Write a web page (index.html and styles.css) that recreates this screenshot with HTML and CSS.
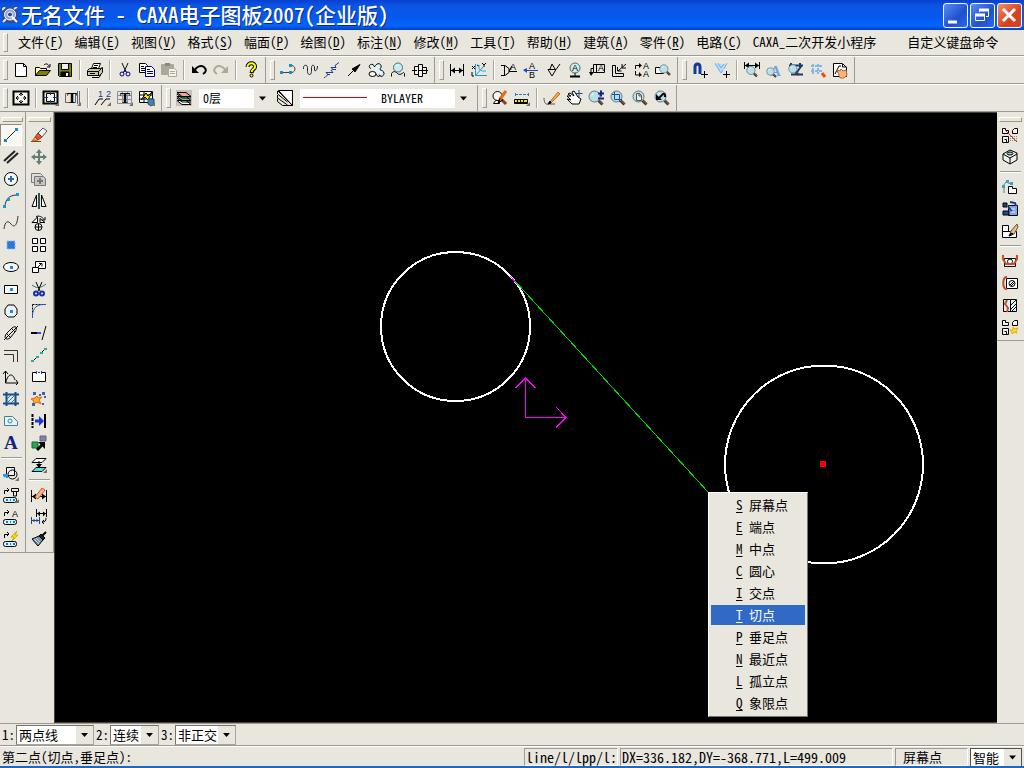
FILE: index.html
```html
<!DOCTYPE html>
<html lang="zh-CN">
<head>
    <meta charset="UTF-8">
    <meta name="viewport" content="width=device-width, initial-scale=1.0">
    <title>无名文件 - CAXA电子图板2007(企业版)</title>
    <link rel="stylesheet" href="styles.css">
</head>
<body>
    <!-- Shared icon parts -->
    <svg class="symbols" aria-hidden="true">
        <symbol id="lens" viewBox="0 0 16 16">
            <path d="M10.500 10.500l4 4" stroke="#333" stroke-width="3"/>
            <path d="M11 10.500l3.500 3.500" stroke="#c66a20"/>
            <circle cx="6.500" cy="6.500" r="5.500" fill="#b9dfe8" stroke="#5d7884"/>
            <path d="M3.500 5.500l2.500-2" stroke="#fff"/>
        </symbol>
        <symbol id="more" viewBox="0 0 16 16">
            <path d="M16 12v4h-4z" fill="#77736a" stroke="none"/>
        </symbol>
        <symbol id="parts" viewBox="0 0 16 16">
            <path d="M.5 1.500h3v2h3v3h-6zM10.500 6.500v-3l2-2h3v5zM.5 9.500h6v6h-6zM2.500 12.500h2v3" fill="#f4f2ec"/>
        </symbol>
    </svg>

    <header class="title-bar">
        <svg class="app-icon" viewBox="0 0 16 16"><rect width="16" height="16" fill="#344a92"/><path d="M0 3l3-3M1 15l3-3M12 2l3-2" stroke="#dfe8ff" stroke-width="2"/><circle cx="8" cy="7.500" r="5.500" fill="#8ea6dc" stroke="#fff"/><circle cx="8" cy="7.500" r="2.500" fill="#344a92" stroke="#fff"/><path d="M10 10l5 5" stroke="#fff" stroke-width="2"/></svg>
        <h1>无名文件 - CAXA电子图板2007(企业版)</h1>
        <div class="window-buttons">
            <button aria-label="最小化"><svg viewBox="0 0 22 22"><path d="M4 18h9" stroke="#fff" stroke-width="3"/></svg></button>
            <button aria-label="还原"><svg viewBox="0 0 22 22"><path d="M8.500 8V5.500h9v7H15M4.500 10.500h9v6h-9z" fill="none" stroke="#fff"/><path d="M8 6h10M4 11h10" stroke="#fff" stroke-width="3"/></svg></button>
            <button class="close" aria-label="关闭"><svg viewBox="0 0 22 22"><path d="M5 5l12 12M17 5L5 17" stroke="#fff" stroke-width="3"/></svg></button>
        </div>
    </header>

    <nav class="menu-bar">
        <button>文件(<u>F</u>)</button>
        <button>编辑(<u>E</u>)</button>
        <button>视图(<u>V</u>)</button>
        <button>格式(<u>S</u>)</button>
        <button>幅面(<u>P</u>)</button>
        <button>绘图(<u>D</u>)</button>
        <button>标注(<u>N</u>)</button>
        <button>修改(<u>M</u>)</button>
        <button>工具(<u>T</u>)</button>
        <button>帮助(<u>H</u>)</button>
        <button>建筑(<u>A</u>)</button>
        <button>零件(<u>R</u>)</button>
        <button>电路(<u>C</u>)</button>
        <button>CAXA_二次开发小程序</button>
        <button class="custom">自定义键盘命令</button>
    </nav>

    <div class="toolbar-row">
        <div class="toolbar">
            <button aria-label="新建"><svg viewBox="0 0 16 16"><path d="M2.500 1.500h8l3 3v10h-11z" fill="#fff"/><path d="M10.500 1.500v3h3"/></svg></button>
            <button aria-label="打开"><svg viewBox="0 0 16 16"><path d="M.5 13.500v-8h4l1 1h6v3" fill="#ffff9c"/><path d="M.5 13.500l4-5h11l-4 5z" fill="#808000"/><path d="M9 3c2-2 4-1 5 1M15 2v3h-3"/></svg></button>
            <button aria-label="保存"><svg viewBox="0 0 16 16"><path d="M1.500 1.500h13v13h-12l-1-1z" fill="#808000"/><path d="M4.500 1.500h7v6h-7z" fill="#eee"/><path d="M4 10h8v4H4z" fill="#000"/><path d="M10 11v3" stroke="#fff" stroke-width="2"/></svg></button>
            <hr>
            <button aria-label="打印"><svg viewBox="0 0 16 16"><path d="M4.500 6.500l2-5h7l-2 5" fill="#fff"/><path d="M7 3.500h4M6 5.500h4"/><path d="M.5 8.500l2-2h11l2-1v5l-3 3h-12z" fill="#c9c5b9"/><path d="M.5 9.500h11l3-3M1 13.500h11M11.500 9.500v4M3 11.500h5M5 15.500h7l2-3"/><path d="M8 11.500h2" stroke="#cc0"/></svg></button>
            <hr>
            <button aria-label="剪切"><svg viewBox="0 0 16 16"><path d="M5 1l4 9M11 1l-4 9" stroke="#111"/><g stroke="#000080"><circle cx="5" cy="12" r="2"/><circle cx="11" cy="12" r="2"/><path d="M8 8l-2 3M8 8l2 3"/></g></svg></button>
            <button aria-label="复制"><svg viewBox="0 0 16 16"><path d="M.5 1.500h6l2 2v7h-8z" fill="#fff"/><path d="M2 4.500h3M2 6.500h5M2 8.500h5"/><path d="M6.500 4.500h6l3 3v7h-9z" fill="#fff" stroke="#000080"/><path d="M8 7.500h3M8 9.500h6M8 11.500h6" stroke="#000080"/></svg></button>
            <button aria-label="粘贴" disabled><svg viewBox="0 0 16 16"><path d="M.5 2.500h12v10H.5z" fill="#aca899" stroke="#aca899"/><path d="M4 2.500h5" stroke="#888" stroke-width="3"/><path d="M7.500 6.500h6l2 2v6h-8z" fill="#f4f2ea" stroke="#aca899"/><path d="M9 9.500h5M9 11.500h5" stroke="#aca899"/></svg></button>
            <hr>
            <button aria-label="撤销"><svg viewBox="0 0 16 16"><path d="M3 9c3-5 7-6 10-4 3 3 2 5-1 7" stroke-width="2"/><path d="M1 4v7h7z" fill="#000" stroke="none"/></svg></button>
            <button aria-label="重做" disabled><svg viewBox="0 0 16 16"><path d="M13 9C10 4 6 3 3 5c-3 3-2 5 1 7" stroke="#aca899" stroke-width="2"/><path d="M15 4v7H8z" fill="#aca899" stroke="none"/></svg></button>
            <hr>
            <button aria-label="帮助"><svg viewBox="0 0 16 16"><path d="M4.500 5c0-5 8-5 7.500 0 0 2-3 2-3.500 6" stroke-width="4"/><path d="M4.500 5c0-5 8-5 7.500 0 0 2-3 2-3.500 5" stroke="#ff0" stroke-width="2"/><circle cx="8.500" cy="13.500" r="1.500" fill="#ff0"/></svg></button>
        </div>
        <div class="toolbar">
            <button aria-label="标注线"><svg viewBox="0 0 16 16"><path d="M2 10.500h10M10 3.500h2c4 1 4 6 0 7" stroke="#444"/><path d="M0 9h3v3H0zM9 9h3v3H9zM9 2h3v3H9z" fill="#1590c8" stroke="none"/></svg></button>
            <button aria-label="波浪线"><svg viewBox="0 0 16 16"><path d="M1.500 7V5.500c0-3 4-3 4 0v4c0 4 4 4 4 0v-4c0-3 3-3 3 0v3M12.500 5v2c0 3 3 2 3-3" stroke="#223"/></svg></button>
            <button aria-label="双折线"><svg viewBox="0 0 16 16"><path d="M0 15.500h1l3-3-2-2h7l-2-2 2-1-2-2h5l-1-2 4-3M3 12.500h3M9 7.500h3" stroke="#1c3c96"/></svg></button>
            <button aria-label="箭头"><svg viewBox="0 0 16 16"><path d="M2 14L12 4"/><path d="M14 2.500L6 7l3 3z" fill="#000"/></svg></button>
            <button aria-label="云线"><svg viewBox="0 0 16 16"><path d="M3 6.500c-3-1-2-5 2-4 1 1 0 2 2 2 1-3 5-4 6-1s-2 3-1 4 4 1 4 4-4 4-5 1" fill="#dff3f5"/><ellipse cx="4.500" cy="12" rx="3.500" ry="2.500" fill="#f8f8f4"/><path d="M8 12c1 3 4 3 4 1"/></svg></button>
            <button aria-label="局部圆"><svg viewBox="0 0 16 16"><path d="M1.500 14.500v-3c2-3 4-2 6 0s5 0 6-1l1 1v3"/><circle cx="8" cy="5.500" r="4.500" fill="#c5edf2" stroke="#466f7b"/><path d="M6 4l2-1" stroke="#fff"/></svg></button>
            <button aria-label="孔轴"><svg viewBox="0 0 16 16"><path d="M2.500 4.500h4v8h-4zM6.500 2.500h4v12h-4zM10.500 5.500h4v6h-4z" fill="#f3f1ea"/><path d="M0 8.500h5M7 8.500h3M11 8.500h5"/></svg></button>
        </div>
        <div class="toolbar">
            <button aria-label="尺寸标注"><svg viewBox="0 0 16 16"><path d="M1.500 2v12M14.500 2v12M2 8.500h12"/><path d="M2 8.500l4-3v6zM14 8.500l-4-3v6z" fill="#000" stroke="none"/></svg></button>
            <button aria-label="坐标标注"><svg viewBox="0 0 16 16"><path d="M4.500 2v11.500H16M5 13l7-8" stroke="#169bd5"/><path d="M1 4l3 3M1 7l3-3M11 1l2 2 2-2M13 3v2M1 10v4h2M6 3l2 1"/><path d="M8 3v4l3 2h4" stroke="#33a6d8"/></svg></button>
            <hr>
            <button aria-label="倒角标注"><svg viewBox="0 0 16 16"><path d="M0 3.500h4l4 3v4l-4 3H0M3.500 4v9M8 9.500h8M8 9l3-5"/><text x="9" y="8">A</text></svg></button>
            <button aria-label="引出说明"><svg viewBox="0 0 16 16"><path d="M1 8.500h14" stroke="#164cc1"/><path d="M0 8l4-2v5z" fill="#164cc1" stroke="none"/><text x="6" y="7">A</text><text x="6" y="16">B</text></svg></button>
            <button aria-label="粗糙度"><svg viewBox="0 0 16 16"><path d="M3 7.500h8L7 14zM11 7.500L15 2"/><path d="M5 7l2-5 3 5"/></svg></button>
            <button aria-label="基准代号"><svg viewBox="0 0 16 16"><circle cx="8" cy="6" r="5" fill="#cdeeed" stroke="#49737a"/><path d="M8 11v3"/><path d="M3 14.500h10" stroke-width="2"/><text x="5" y="9">A</text></svg></button>
            <button aria-label="形位公差"><svg viewBox="0 0 16 16"><path d="M4.500 2.500h11v8h-11zM7.500 2v8M4 6.500H2V11" fill="none"/><path d="M0 10h5l-3 4z" fill="#000" stroke="none"/><text x="9" y="9">A</text></svg></button>
            <button aria-label="焊接符号"><svg viewBox="0 0 16 16"><path d="M1.500 3.500h3v8h8v3h-11zM15 2L7 9M6.500 5v4h4M11 2v4h4"/></svg></button>
            <button aria-label="剖切符号"><svg viewBox="0 0 16 16"><path d="M2.500 7V3.500H6M2.500 9v4H6"/><path d="M6 1l3 2.500L6 6zM6 10l3 3-3 2z" fill="#000" stroke="none"/><text x="10" y="7">A</text><text x="10" y="15">A</text></svg></button>
            <button aria-label="局部放大"><svg viewBox="0 0 16 16"><path d="M.5 5.500h8v6h-8z" fill="#f7f5ee"/><use href="#lens" x="4" y="1" width="12" height="14"/></svg></button>
        </div>
        <div class="toolbar">
            <button aria-label="捕捉设置"><svg viewBox="0 0 16 16"><path d="M3 12V5c0-4 5-4 5 0v7" stroke="#123a94" stroke-width="3"/><path d="M9 12.500h7M12.500 9v7"/></svg></button>
            <button aria-label="拾取过滤"><svg viewBox="0 0 16 16"><path d="M0 2h13l-6 10z" fill="#b6dbfb" stroke="none"/><path d="M1 1l6 10 2-3M13 1l-3 6M4 1l3 5 3-4" stroke="#78b1e2"/><path d="M9 12.500h7M12.500 9v7"/></svg></button>
            <hr>
            <button aria-label="查询距离"><svg viewBox="0 0 16 16"><path d="M.5 0v7M15.500 0v7M1 3.500h14"/><path d="M1 3.500l4-3v6zM15 3.500l-4-3v6z" fill="#000" stroke="none"/><use href="#lens" x="2" y="3" width="12" height="13"/></svg></button>
            <button aria-label="文字查找"><svg viewBox="0 0 16 16"><text class="big blue" x="4" y="14">A</text><use href="#lens" x="0" y="5" width="11" height="11"/></svg></button>
            <button aria-label="查询面积"><svg viewBox="0 0 16 16"><path d="M1 3.500h14M3 12.500h12M14 3L7 13M3 1v4M12 1v4" stroke="#153d72" stroke-width="2"/><use href="#lens" x="0" y="2" width="12" height="12"/></svg></button>
            <button aria-label="栅格"><svg viewBox="0 0 16 16"><path d="M1 4h12M1 9h12M3 2v10M8 2v10" stroke="#84b6ec" stroke-width="2" stroke-dasharray="3 1"/><path d="M12 11l3 4" stroke="#f04c18" stroke-width="3"/></svg></button>
            <button aria-label="实时平移"><svg viewBox="0 0 16 16"><path d="M1.500 1.500h9l4 4v9h-13z" fill="#fff"/><path d="M3 12L7 4h2M10.500 2v3h4"/><path d="M6 11l-1-3 3 1 1-2 2 2 3-1 1 5-3 3H8z" fill="#f4b57e" stroke="#b4642c"/></svg></button>
        </div>
    </div>

    <div class="toolbar-row">
        <div class="toolbar">
            <button aria-label="图幅设置"><svg viewBox="0 0 16 16"><path d="M.5 1.500h15v13H.5z" fill="#f4f2ec" stroke-width="2"/><path d="M8 3v3M8 10v3M3 8h3M10 8h3M6 5l2-2 2 2M6 11l2 2 2-2M5 6L3 8l2 2M11 6l2 2-2 2"/></svg></button>
            <hr>
            <button aria-label="调入图框"><svg viewBox="0 0 16 16"><path d="M.5 1.500h14v12H.5z" fill="#f4f2ec" stroke-width="2"/><path d="M3.500 3.500h8v8h-8z"/><path d="M7.500 1v4M7.500 10v4M0 7.500h5M10 7.500h5" stroke="#123b80"/><use href="#more"/></svg></button>
            <button aria-label="调入标题栏"><svg viewBox="0 0 16 16"><path d="M.5 3.500h10v9H.5zM14.500 1v13M12.500 1v13" stroke="#666"/><text class="big" x="2" y="13">T</text><use href="#more"/></svg></button>
            <hr>
            <button aria-label="生成序号"><svg viewBox="0 0 16 16"><text class="navy" x="3" y="7">1</text><text class="navy" x="11" y="7">2</text><path d="M0 15l4-6h4M6 15l5-6h4"/><use href="#more"/></svg></button>
            <button aria-label="填写明细表"><svg viewBox="0 0 16 16"><path d="M.5 1.500h14v12H.5zM0 5.500h15M0 9.500h15M5.500 1v13M10.500 1v13" stroke="#8593a3"/><text class="big" x="3" y="13">T</text><use href="#more"/></svg></button>
            <button aria-label="明细表输出"><svg viewBox="0 0 16 16"><path d="M.5 1.500h13v11H.5z" fill="#fff"/><path d="M0 5h14M0 9h14M5 1v12"/><path d="M2 10l5-7 2 3 4-4-4 8-3-3z" fill="#ffe600"/><path d="M9 9h6v5l-3 2-3-2z" fill="#4780b7" stroke="#234f7b"/><use href="#more"/></svg></button>
        </div>
        <div class="toolbar">
            <button aria-label="层控制"><svg viewBox="0 0 16 16"><path d="M0 0h16v16H0z" fill="#c4c1bb" stroke="none"/><path d="M1 10.500h9l5 4H6z" fill="#fff"/><path d="M1 6.500h9l5 4H6z" fill="#64cf78"/><path d="M1 2.500h9l5 4H6z" fill="#f7a29a"/><path d="M1 4l5 4h9M1 8l5 4h9"/></svg></button>
            <select class="layer" aria-label="当前层"><option>0层</option></select>
            <button aria-label="线型"><svg viewBox="0 0 16 16"><path d="M1.500.5h14v15z" fill="#fff"/><path d="M15.500.5v15M.5 1v3l10 8M.5 5v3l10 7M.5 8.500v3l5 4h10M1 1l14 14"/></svg></button>
            <select class="line-type" aria-label="当前线型"><option>BYLAYER</option></select>
        </div>
        <div class="toolbar">
            <button aria-label="重画"><svg viewBox="0 0 16 16"><path d="M1.500 13.500h6v-3h-4z" fill="#fff"/><circle cx="5.500" cy="6" r="4.500" fill="#fff6ea"/><path d="M9 9l5 5" stroke="#8e3d14" stroke-width="3"/><path d="M14 1L8 9" stroke="#e96a1a" stroke-width="3"/><path d="M8 8l-2 5 5-3"/></svg></button>
            <button aria-label="比例尺"><svg viewBox="0 0 16 16"><path d="M1 4.500h14M1.500 3v3M14.500 3v3" stroke="#3e78ac" stroke-dasharray="3 1"/><path d="M.5 9.500h13v4H.5z" fill="#ffe600"/><path d="M0 12.500h14M3.500 10v2M6.500 10v2M9.500 10v2"/><use href="#more"/></svg></button>
            <hr>
            <button aria-label="画笔"><svg viewBox="0 0 16 16"><path d="M0 8c0 5 2 7 5 6h6" stroke="#555"/><path d="M5 13L14 2l2 2-9 9z" fill="#f6a646" stroke="#c96a20"/><path d="M4 14l2-3 1 2z" fill="#000"/></svg></button>
            <button aria-label="动态平移"><svg viewBox="0 0 16 16"><path d="M1 6h4L2 4l2-1 4 3-2-4 2-1 4 6 3 2-2 5H6L1 9l4 1z" fill="#fff"/><path d="M13 0v7M9.500 3.500h7" stroke="#174b85"/></svg></button>
            <button aria-label="动态缩放"><svg viewBox="0 0 16 16"><use href="#lens"/><path d="M10 3.500h6M13 .5v6M10 8.500h6" stroke="#18238c" stroke-width="2"/></svg></button>
            <button aria-label="窗口放大"><svg viewBox="0 0 16 16"><use href="#lens"/><path d="M4.500 4.500h5v5h-5zM2 4.500h3M9.500 9v3M4.500 2v3M9 9.500h3" stroke="#164e9e"/></svg></button>
            <button aria-label="显示全部"><svg viewBox="0 0 16 16"><use href="#lens"/><path d="M4.500 3.500h3l2 2v5h-5zM7 3v3h3" fill="#e8eeee" stroke="#555"/></svg></button>
            <button aria-label="显示上一步"><svg viewBox="0 0 16 16"><use href="#lens"/><path d="M5 8l4-4c2-1 2 1 2 3" stroke-width="2"/><path d="M2 4v6h6z" fill="#000" stroke="none"/></svg></button>
        </div>
    </div>

    <main class="workspace">
        <aside class="side-bar">
            <button class="active" aria-label="直线"><svg viewBox="0 0 16 16"><path d="M2 14L14 2" stroke="#222"/><path d="M1 12h3v3H1zM12 1h3v3h-3z" fill="#1e86cc" stroke="none"/></svg></button>
            <button aria-label="平行线"><svg viewBox="0 0 16 16"><path d="M1 12L12 2M4 14L15 4" stroke="#222" stroke-width="2"/></svg></button>
            <button aria-label="圆"><svg viewBox="0 0 16 16"><circle cx="8" cy="8" r="6.500" fill="#f4faff"/><path d="M5 8h6M8 5v6" stroke="#2467cf" stroke-width="2"/></svg></button>
            <button aria-label="圆弧"><svg viewBox="0 0 16 16"><path d="M2 14C2 7 6 2 14 2" stroke="#333"/><path d="M0 12h3v3H0zM4 5h3v3H4zM13 0h3v3h-3z" fill="#1e96dc" stroke="none"/></svg></button>
            <button aria-label="样条"><svg viewBox="0 0 16 16"><path d="M1 14c1-8 4-9 7-5s6 2 7-8" stroke="#333"/></svg></button>
            <button aria-label="点"><svg viewBox="0 0 16 16"><path d="M4 4h8v8H4z" fill="#2d76d8" stroke="#90b8f0" stroke-dasharray="2 1"/></svg></button>
            <button aria-label="椭圆"><svg viewBox="0 0 16 16"><ellipse cx="8" cy="8" rx="7.500" ry="4.500" fill="#f4faff"/><path d="M7 7h3v3H7z" fill="#2d86d8" stroke="none"/></svg></button>
            <button aria-label="矩形"><svg viewBox="0 0 16 16"><path d="M1.500 4.500h13v8h-13z" fill="#f4faff"/><path d="M7 7h3v3H7z" fill="#2d86d8" stroke="none"/></svg></button>
            <button aria-label="正多边形"><svg viewBox="0 0 16 16"><path d="M5 2h6l3 4v5l-3 3H5l-3-3V6z" fill="#e8f4fb"/><path d="M7 7h3v3H7z" fill="#2d86d8" stroke="none"/></svg></button>
            <button aria-label="中心线"><svg viewBox="0 0 16 16"><path d="M4 8l5-5c4-3 6 0 3 4l-5 6c-4 3-7-1-3-5zM1 15L15 1M8 3l4 4M4 9l4 4"/></svg></button>
            <button aria-label="等距线"><svg viewBox="0 0 16 16"><path d="M1 3.500h13.500V15M1 7.500h9.500V15" stroke="#333"/></svg></button>
            <button aria-label="公式曲线"><svg viewBox="0 0 16 16"><path d="M2.500 2v12H15M0 5l2.500-3L5 5M13 11l2 3-2 2M3 13c2-9 7-9 9-2"/></svg></button>
            <button aria-label="剖面线"><svg viewBox="0 0 16 16"><path d="M3.500 1v14M12.500 1v14M0 3.500h16M0 12.500h16" stroke="#174f87" stroke-width="2"/><path d="M4 8l4-4M4 12l8-8M8 12l4-4" stroke="#2375a8"/></svg></button>
            <button aria-label="填充"><svg viewBox="0 0 16 16"><path d="M1.500 3.500h8l5 5v4h-13z" fill="#e4f3f9" stroke="#4a7e91"/><circle cx="7" cy="8" r="2" stroke="#288ca7"/></svg></button>
            <button aria-label="文字"><svg viewBox="0 0 16 16"><text class="serif" x="1" y="14">A</text></svg></button>
            <hr>
            <button aria-label="块生成"><svg viewBox="0 0 16 16"><path d="M3.500 2.500h8v8h-8z" fill="#f4f2ec"/><circle cx="9.500" cy="9.500" r="4.500"/><path d="M0 10h4v3M1 12l2-2" stroke="#219ce0" stroke-width="2"/><use href="#more"/></svg></button>
            <button aria-label="提取图符"><svg viewBox="0 0 16 16"><path d="M1.500 7V3.500H6M4 1l2 2-2 2M8.500 1.500h7v3h-7zM10.500 5v4h3V5"/><rect x=".5" y="10.500" width="13" height="5" rx="2" fill="#cdf4ff"/><path d="M3 13h2M7 13h1M10 13h2" stroke="#167bb2" stroke-width="2"/><use href="#more"/></svg></button>
            <button aria-label="定义图符"><svg viewBox="0 0 16 16"><path d="M1.500 7V3.500H6M4 1l2 2-2 2"/><text x="9" y="8">A</text><rect x=".5" y="10.500" width="13" height="5" rx="2" fill="#cdf4ff"/><path d="M3 13h2M7 13h1M10 13h2" stroke="#167bb2" stroke-width="2"/></svg></button>
            <button aria-label="驱动图符"><svg viewBox="0 0 16 16"><path d="M1.500 7V3.500H6M4 1l2 2-2 2"/><path d="M14 0L8 6h3L9 10l6-6h-3z" fill="#ffe600" stroke="#d7a700"/><rect x=".5" y="10.500" width="13" height="5" rx="2" fill="#cdf4ff"/><path d="M3 13h2M7 13h1M10 13h2" stroke="#167bb2" stroke-width="2"/></svg></button>
        </aside>
        <aside class="side-bar second">
            <button aria-label="删除"><svg viewBox="0 0 16 16"><path d="M0 14.500h10" stroke="#9d352b"/><path d="M1 14l3-4 3 3z" fill="#f4ac54" stroke="#b06a2a"/><path d="M7 6l5-5 4 3-5 6z" fill="#f6f4ee" stroke="#555"/><path d="M4 10l3-4 4 4-4 3z" fill="#e45631" stroke="#8a3a20"/></svg></button>
            <button aria-label="平移"><svg viewBox="0 0 16 16"><path d="M8 2v12M2 8h12" stroke="#647e76" stroke-width="2"/><path d="M8 0l3 4H5zM8 16l3-4H5zM0 8l4-3v6zM16 8l-4-3v6z" fill="#647e76" stroke="none"/></svg></button>
            <button aria-label="平移复制"><svg viewBox="0 0 16 16"><g stroke="#777"><path d="M.5 2.500h9l2 2v7h-11z" fill="#ddd"/><path d="M3.500 5.500h9l2 2v7h-11z" fill="#c6c6c6"/><path d="M9 7v6M6 10h6" stroke-width="2"/></g></svg></button>
            <button aria-label="镜像"><svg viewBox="0 0 16 16"><path d="M5.500 2v11.500H1zM10.500 2v11.500H15z" fill="#f4f8f6"/><path d="M8 0v16" stroke="#355" stroke-width="2"/></svg></button>
            <button aria-label="旋转"><svg viewBox="0 0 16 16"><path d="M6.500 2L1 7.500h5.500zM9 3.500l5 4H9zM5 1.500c3-1 6 0 8 3M14 2v3h-3" fill="#f4f2ec"/><circle cx="7.500" cy="12" r="3.500" fill="#f4f2ec"/><path d="M4 12h7M7.500 8.500v7"/></svg></button>
            <button aria-label="阵列"><svg viewBox="0 0 16 16"><path d="M1.500 1.500h5v5h-5zM9.500 1.500h5v5h-5zM1.500 9.500h5v5h-5zM9.500 9.500h5v5h-5z" fill="#fff"/></svg></button>
            <button aria-label="比例缩放"><svg viewBox="0 0 16 16"><path d="M4.500 2.500h10v7h-10z" fill="#fff"/><path d="M1.500 8.500h6v5h-6z" fill="#fff"/><path d="M7 8l4-4M8 4.500h3v3"/></svg></button>
            <button aria-label="裁剪"><svg viewBox="0 0 16 16"><path d="M1 4c5 4 9 3 14-1" stroke="#2d7777"/><path d="M5 1l4 9M11 1L7 10"/><g stroke="#1732a8" stroke-width="2"><circle cx="5" cy="12.500" r="2"/><circle cx="11" cy="12.500" r="2"/></g></svg></button>
            <button aria-label="过渡"><svg viewBox="0 0 16 16"><path d="M1.500 1.500H15M1.500 1.500V15" stroke-dasharray="2 1"/><path d="M1.500 15V12C2 5 6 1.500 12 1.500h3" stroke="#2855b3"/></svg></button>
            <button aria-label="延伸"><svg viewBox="0 0 16 16"><path d="M0 8h6" stroke-width="2"/><path d="M6 8h4" stroke="#2855d8" stroke-width="2"/><path d="M15 1l-4 14"/></svg></button>
            <button aria-label="打断"><svg viewBox="0 0 16 16"><path d="M2 14l4-4M10 6l4-4"/><path d="M0 13h3v2H0zM5 9h3v2H5zM9 5h3v2H9zM13 1h3v2h-3z" fill="#2da4b4" stroke="none"/></svg></button>
            <button aria-label="拉伸"><svg viewBox="0 0 16 16"><path d="M5 3.500H1.500v9h13v-9H11" fill="#fff"/><path d="M5.500 2v3M10.500 2v3M7 3.500h2" stroke="#283c9d"/></svg></button>
            <button aria-label="打散"><svg viewBox="0 0 16 16"><path d="M6 5l1 2 4-1-3 3 2 4-4-2-4 3 1-4-3-2 4-1z" fill="#ffae22" stroke="#df6618"/><path d="M2 1h3v3H2zM11 1h3v3h-3zM8 3h2v2H8zM13 5h2v2h-2zM1 12h3v3H1zM11 12h2v2h-2z" fill="#4060a8" stroke="none"/></svg></button>
            <button aria-label="移动到"><svg viewBox="0 0 16 16"><path d="M1.500 1v14" stroke-width="2" stroke-dasharray="3 1"/><path d="M14 1v14" stroke-width="2"/><path d="M4 8h5" stroke="#1732e8" stroke-width="3"/><path d="M8 3l5 5-5 5z" fill="#1732e8" stroke="none"/></svg></button>
            <button aria-label="格式刷"><svg viewBox="0 0 16 16"><path d="M1 7h6v6H1z" fill="#28a55a" stroke="#176637"/><path d="M9 1h6v5H9z" fill="#8080bd" stroke="#667"/><path d="M6 15l6-6" stroke-width="3"/><path d="M7 7h7v7z" fill="#000" stroke="none"/></svg></button>
            <button aria-label="图层转换"><svg viewBox="0 0 16 16"><path d="M5 1.500h10l-4 4H1z" fill="#fff"/><path d="M5 10.500h10l-4 4H1z" fill="#53e0e5"/><path d="M8 4v5"/><path d="M5 7h6l-3 4z" fill="#000" stroke="none"/><use href="#more"/></svg></button>
            <hr>
            <button aria-label="标注编辑"><svg viewBox="0 0 16 16"><path d="M.5 3v12M15.500 3v12M1 9.500h14"/><path d="M1 9.500l4-3v6zM15 9.500l-4-3v6z" fill="#000" stroke="none"/><path d="M4 10l7-9 3 2-7 9z" fill="#f7b58e" stroke="#c06020"/></svg></button>
            <button aria-label="尺寸驱动"><svg viewBox="0 0 16 16"><path d="M5.500 0v8M15.500 0v8M6 4.500h9M15 9c0 3-1 4-4 4M13 11l-2 2 2 2"/><path d="M6 4.500l3-2v5zM15 4.500l-3-2v5z" fill="#000" stroke="none"/><path d="M.5 8v7M8.500 8v7M1 11.500h7M3 10v3M6 10v3" stroke="#17488f"/></svg></button>
            <button aria-label="清理"><svg viewBox="0 0 16 16"><path d="M15 1l-4 4" stroke-width="2"/><path d="M10 3l4 4-2 2-4-4z" fill="#222"/><path d="M8 5l4 4-5 6-6-7z" fill="#7793ad"/><path d="M3 8l5 5M5 7l4 4" stroke="#c8d7e5"/></svg></button>
        </aside>

        <section class="canvas">
            <svg class="drawing">
                <circle cx="400.500" cy="213.500" r="74.500"/>
                <circle cx="769" cy="351.500" r="99"/>
                <path class="rubber-line" d="M459 167L653 379"/>
                <path class="axis" d="M455 163l7 8M470.500 264v40.500H511M460.500 275l10-10 10 10M501 294l10 10.500-10 10"/>
                <rect x="765" y="348" width="6" height="6"/>
            </svg>
            <div class="snap-menu" role="menu">
                <button role="menuitem"><u>S</u> 屏幕点</button>
                <button role="menuitem"><u>E</u> 端点</button>
                <button role="menuitem"><u>M</u> 中点</button>
                <button role="menuitem"><u>C</u> 圆心</button>
                <button role="menuitem"><u>I</u> 交点</button>
                <button role="menuitem" class="selected"><u>T</u> 切点</button>
                <button role="menuitem"><u>P</u> 垂足点</button>
                <button role="menuitem"><u>N</u> 最近点</button>
                <button role="menuitem"><u>L</u> 孤立点</button>
                <button role="menuitem"><u>Q</u> 象限点</button>
            </div>
        </section>

        <aside class="side-bar right">
            <button aria-label="零件"><svg viewBox="0 0 16 16"><use href="#parts"/><path d="M8 9.500h8M8 11.500h8M8 13.500h8" stroke="#888" stroke-dasharray="1 1"/><path d="M3 3l12 12" stroke="#d52c23"/></svg></button>
            <button aria-label="三维"><svg viewBox="0 0 16 16"><path d="M1 5l7-4 7 3v7l-7 4-7-4z" fill="#e9f5ec"/><path d="M1 5l7 4 7-4M8 9v6"/><ellipse cx="8" cy="4.500" rx="3" ry="1.500" fill="#9cc"/></svg></button>
            <hr>
            <button aria-label="关联"><svg viewBox="0 0 16 16"><path d="M1 7l3-4 5 2M2 8v6" stroke="#777"/><path d="M0 6h3v3H0zM4 1h3v3H4zM8 3h3v3H8z" fill="#37a0d0" stroke="none"/><path d="M6.500 7.500h4v2h4v5h-8z" fill="#fff"/></svg></button>
            <button aria-label="更新"><svg viewBox="0 0 16 16"><path d="M6.500 4.500h9v10h-9z" fill="#88a7dd"/><path d="M1 2h4v4H1zM1 10h6v4H1z" fill="#1849a6"/><path d="M8 1l5 1 1 3M6 6l4 4" stroke="#123a8a" stroke-width="2"/><path d="M9 8h4M9 11h4" stroke="#dceaff"/></svg></button>
            <button aria-label="编辑"><svg viewBox="0 0 16 16"><path d="M.5 2.500h6v6h-6zM.5 8.500h14v6H.5z" fill="#fff"/><path d="M15 1L9 8l-2 5 5-2 4-7z" fill="#e9bd7f" stroke="#6b5136"/><path d="M7 13l2-3 2 1z" fill="#000"/></svg></button>
            <hr>
            <button aria-label="主视图"><svg viewBox="0 0 16 16"><path d="M2.500 5.500h11v8h-11z" fill="#fff"/><circle cx="8" cy="8.500" r="2.500"/><path d="M1 2v4l3 5h8l3-5V2" stroke="#cf4c20" stroke-width="2"/></svg></button>
            <button aria-label="俯视图"><svg viewBox="0 0 16 16"><path d="M4.500 3.500h11v10h-11z" fill="#fff"/><circle cx="10" cy="8.500" r="3"/><path d="M8 10l4-4M9 11l4-4"/><path d="M5 2C0 1 0 15 5 14" stroke="#c94a25" stroke-width="2"/></svg></button>
            <button aria-label="剖视图"><svg viewBox="0 0 16 16"><path d="M1.500 2.500h13v12h-13z" fill="#d9f7fb"/><path d="M8.500 3v12M9 8l5-5M9 12l5-5M10 14l4-4"/><path d="M5 3l-2 4 3 4-1 4" stroke="#cf4c20" stroke-width="2"/></svg></button>
            <button aria-label="打散零件"><svg viewBox="0 0 16 16"><use href="#parts"/><path d="M11 8l1 2 4-1-2 3 1 2-3-1-2 2v-2l-2-2h3z" fill="#ffdd17" stroke="#e2ae00"/></svg></button>
        </aside>
    </main>

    <div class="option-bar">
        <label for="lineMode">1:</label>
        <select id="lineMode" class="wide"><option>两点线</option></select>
        <label for="chainMode">2:</label>
        <select id="chainMode"><option>连续</option></select>
        <label for="orthoMode">3:</label>
        <select id="orthoMode" class="medium"><option>非正交</option></select>
    </div>

    <footer class="status-bar">
        <span class="prompt">第二点(切点,垂足点):</span>
        <span class="cell command">line/l/lpp/l:</span>
        <span class="cell position">DX=336.182,DY=-368.771,L=499.009</span>
        <span class="cell snap">屏幕点</span>
        <select aria-label="捕捉方式"><option>智能</option></select>
    </footer>
</body>
</html>
```

FILE: styles.css
```css
* {
    box-sizing: border-box;
}

body {
    margin: 0;
    height: 100vh;
    display: flex;
    flex-direction: column;
    overflow: hidden;
    background-color: #e9e6de;
    color: #000;
    font-family: "Noto Sans CJK SC", "Liberation Sans", sans-serif;
    font-size: 13px;
    /* half-width latin letters, two to one Chinese character */
    font-feature-settings: "hwid" 1;
}

button,
select {
    margin: 0;
    padding: 0;
    border: none;
    background: none;
    color: inherit;
    font: inherit;
    font-feature-settings: inherit;
}

u {
    text-underline-offset: 2px;
}

.symbols {
    position: absolute;
    width: 0;
    height: 0;
}

/* Title bar */
.title-bar {
    flex: none;
    display: flex;
    align-items: center;
    height: 30px;
    padding: 0 2px;
    background: linear-gradient(#0a3fd0, #0a55e4 20%, #0559ee 60%, #0266fc 85%, #0240c4);
}

.app-icon {
    width: 16px;
    height: 16px;
    fill: none;
}

.title-bar h1 {
    flex: 1;
    margin: 0 0 0 3px;
    color: #fff;
    font-size: 21px;
    font-weight: 500;
    line-height: 26px;
    padding-bottom: 2px;
    text-shadow: 1px 1px 0 #0a2a80;
    white-space: nowrap;
}

.window-buttons {
    display: flex;
    gap: 2px;
}

.window-buttons button {
    width: 25px;
    height: 25px;
    border: 1px solid #fff;
    border-radius: 3px;
    background: linear-gradient(135deg, #5b8cf0, #1e50d0 60%, #2c6af0);
}

.window-buttons .close {
    background: linear-gradient(135deg, #f0906c, #d8401c 60%, #c8482c);
}

.window-buttons svg {
    display: block;
    width: 22px;
    height: 22px;
}

/* Menu and toolbars */
.menu-bar {
    position: relative;
    flex: none;
    display: flex;
    gap: 11px;
    height: 26px;
    padding: 0 0 2px 18px;
    border-bottom: 1px solid #9c9a94;
    white-space: nowrap;
}

.menu-bar .custom {
    margin-left: 20px;
}

.toolbar-row {
    flex: none;
    display: flex;
    gap: 1px;
    height: 28px;
    border-top: 1px solid #fff;
    border-bottom: 1px solid #9c9a94;
}

.toolbar {
    position: relative;
    display: flex;
    align-items: center;
    padding: 0 3px 0 10px;
    border-right: 1px solid #9c9a94;
}

.menu-bar::before,
.toolbar::before {
    content: "";
    position: absolute;
    left: 3px;
    top: 3px;
    bottom: 3px;
    width: 3px;
    border: 1px solid;
    border-color: #fff #9c9a94 #9c9a94 #fff;
}

.toolbar button,
.side-bar button {
    flex: none;
    display: flex;
    align-items: center;
    justify-content: center;
    width: 22px;
    height: 22px;
}

.toolbar svg,
.side-bar svg {
    width: 16px;
    height: 16px;
    overflow: visible;
    fill: none;
    stroke: #000;
}

.toolbar text,
.side-bar text {
    fill: #000;
    stroke: none;
    font-family: "Liberation Sans", sans-serif;
    font-size: 9px;
}

.toolbar text.big {
    font-family: "Liberation Serif", serif;
    font-size: 15px;
    font-weight: bold;
}

.toolbar text.blue {
    fill: #6da5e4;
}

.toolbar text.navy {
    fill: #123b90;
}

.side-bar text.serif {
    fill: #14207a;
    font-family: "Liberation Serif", serif;
    font-size: 19px;
    font-weight: bold;
}

.toolbar hr {
    width: 2px;
    height: 20px;
    margin: 0 3px;
    border: none;
    border-left: 1px solid #aaa89c;
    border-right: 1px solid #fff;
}

/* Drop-down lists */
select {
    appearance: none;
    height: 19px;
    padding-left: 3px;
    border-radius: 0;
    line-height: 16px;
    background: #fff url("data:image/svg+xml,%3Csvg xmlns='http://www.w3.org/2000/svg' width='17' height='20'%3E%3Cpath d='M0 0h17v20H0z' fill='%23e9e6de'/%3E%3Cpath d='M5 8h7l-3.500 4z'/%3E%3C/svg%3E") no-repeat right center;
}

.toolbar select {
    font-size: 12px;
}

.toolbar .layer {
    width: 72px;
    margin: 0 3px 0 4px;
    padding-left: 4px;
}

.toolbar .line-type {
    width: 172px;
    margin: 0 2px 0 4px;
    padding-left: 81px;
    background-image: url("data:image/svg+xml,%3Csvg xmlns='http://www.w3.org/2000/svg' width='17' height='20'%3E%3Cpath d='M0 0h17v20H0z' fill='%23e9e6de'/%3E%3Cpath d='M5 8h7l-3.500 4z'/%3E%3C/svg%3E"), linear-gradient(#e00000, #e00000);
    background-position: right center, 3px 8px;
    background-size: 17px 20px, 64px 1px;
}

/* Work area */
.workspace {
    flex: 1;
    display: flex;
    align-items: flex-start;
    min-height: 0;
}

.side-bar {
    position: relative;
    flex: none;
    width: 26px;
    padding: 12px 2px 2px 0;
    border-right: 1px solid #9c9a94;
    border-bottom: 1px solid #9c9a94;
}

.side-bar.second {
    width: 28px;
    padding-left: 2px;
}

.side-bar.right {
    width: 27px;
    padding-left: 2px;
    border-right: none;
}

.side-bar::before {
    content: "";
    position: absolute;
    left: 2px;
    right: 2px;
    top: 5px;
    height: 3px;
    border: 1px solid;
    border-color: #fff #9c9a70 #9c9a70 #fff;
}

.side-bar hr {
    height: 2px;
    margin: 3px 1px;
    border: none;
    border-top: 1px solid #9c9a94;
    border-bottom: 1px solid #fff;
}

.side-bar .active {
    border: 1px solid;
    border-color: #8c8a84 #fff #fff #8c8a84;
    background-color: #f8f7f3;
}

.canvas {
    position: relative;
    flex: 1;
    align-self: stretch;
    overflow: hidden;
    border: 1px solid #4a4036;
    border-right: none;
    background-color: #000;
}

.drawing {
    display: block;
    width: 100%;
    height: 100%;
    fill: none;
    stroke: #fff;
    stroke-width: 2;
    shape-rendering: crispEdges;
}

.drawing .rubber-line {
    stroke: #00e000;
    stroke-width: 1;
}

.drawing .axis {
    stroke: #f0f;
    stroke-width: 1;
}

.drawing rect {
    fill: #f00;
    stroke: none;
}

/* Snap point menu */
.snap-menu {
    position: absolute;
    left: 653px;
    top: 379px;
    width: 100px;
    padding: 1px 2px 2px;
    border: 1px solid;
    border-color: #fff #77756a #77756a #fff;
    background-color: #e9e6de;
}

.snap-menu button {
    display: block;
    width: 100%;
    height: 22px;
    padding-left: 25px;
    border: 1px solid #e9e6de;
    border-width: 1px 0;
    line-height: 20px;
    text-align: left;
    white-space: pre;
}

.snap-menu .selected {
    background-color: #316ac5;
    color: #fff;
}

/* Option bar and status bar */
.option-bar {
    flex: none;
    display: flex;
    align-items: center;
    height: 23px;
    padding-left: 2px;
    border-top: 1px solid #9c9a94;
    border-bottom: 1px solid #9c9a94;
}

.option-bar label {
    width: 14px;
}

.option-bar select {
    width: 49px;
    height: 20px;
    margin-right: 2px;
    border: 1px solid;
    border-color: #77756a #a8a598 #a8a598 #77756a;
    padding-left: 2px;
}

.option-bar .wide {
    width: 78px;
}

.option-bar .medium {
    width: 61px;
}

.status-bar {
    flex: none;
    display: flex;
    gap: 2px;
    height: 22px;
    padding: 1px 2px 0;
    border-top: 1px solid #fff;
    border-bottom: 2px solid #1a68c8;
    line-height: 18px;
    white-space: nowrap;
}

.status-bar .prompt {
    flex: 1;
}

.status-bar .cell {
    padding-left: 1px;
    border: 1px solid;
    border-color: #9c9a94 #fff #fff #9c9a94;
    line-height: 16px;
}

.status-bar .command {
    width: 94px;
    font-size: 14px;
}

.status-bar .position {
    width: 273px;
    font-size: 14px;
}

.status-bar .snap {
    width: 73px;
    padding-left: 7px;
}

.status-bar select {
    width: 52px;
    height: 18px;
    padding-left: 2px;
    border: 1px solid #55534c;
    border-width: 1px 1px 0;
}
```
